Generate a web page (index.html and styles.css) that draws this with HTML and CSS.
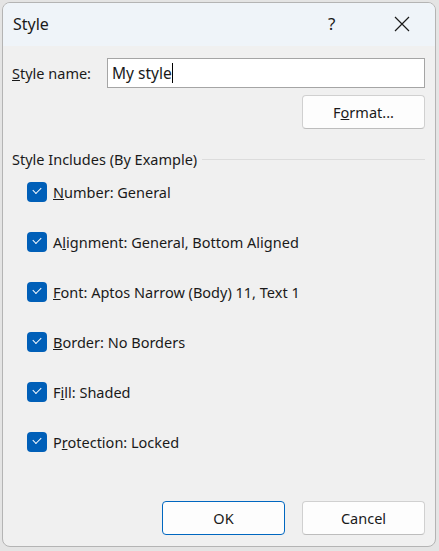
FILE: index.html
```html
<!DOCTYPE html>
<html lang="en">
  <head>
    <title>Style</title>
    <meta charset="UTF-8" />
    <meta name="viewport" content="width=device-width, initial-scale=1.0" />
    <link rel="stylesheet" href="styles.css">
  </head>
  <body>
    <div class="dialog">
      <div class="titlebar">
        <span class="title">Style</span>
        <span class="help">?</span>
        <span class="close">
          <svg width="16" height="16" viewBox="0 0 16 16">
            <path d="M1 1 L15 15 M15 1 L1 15" stroke="#1a1a1a" stroke-width="1.2" fill="none" />
          </svg>
        </span>
      </div>

      <div class="content">
        <div class="name-row">
          <label for="style-name"><u>S</u>tyle name:</label>
          <div class="name-input" id="style-name">My style<span class="caret"></span></div>
        </div>
        <div class="format-row">
          <button class="btn">F<u>o</u>rmat...</button>
        </div>

        <div class="group-title">
          <span>Style Includes (By Example)</span>
          <span class="group-line"></span>
        </div>

        <ul class="includes">
          <li><span class="check"></span><span><u>N</u>umber: General</span></li>
          <li><span class="check"></span><span>A<u>l</u>ignment: General, Bottom Aligned</span></li>
          <li><span class="check"></span><span><u>F</u>ont: Aptos Narrow (Body) 11, Text 1</span></li>
          <li><span class="check"></span><span><u>B</u>order: No Borders</span></li>
          <li><span class="check"></span><span>F<u>i</u>ll: Shaded</span></li>
          <li><span class="check"></span><span>P<u>r</u>otection: Locked</span></li>
        </ul>

        <div class="actions">
          <button class="btn btn-default">OK</button>
          <button class="btn">Cancel</button>
        </div>
      </div>
    </div>
  </body>
</html>
```

FILE: styles.css
```css
body {
  margin: 0;
  height: 551px;
  background: #e4e4e4;
  font-family: "Noto Sans", "Open Sans", sans-serif;
  font-size: 14.5px;
  color: #1a1a1a;
  overflow: hidden;
}
.dialog {
  margin: 2px 0 0 2px;
  width: 434px;
  height: 545px;
  background: #f0f0f0;
  border: 1px solid #b4b4b4;
  border-radius: 8px;
  box-sizing: border-box;
  overflow: hidden;
  display: flex;
  flex-direction: column;
}
.titlebar {
  height: 43px;
  background: #eff4f9;
  display: flex;
  align-items: center;
  padding-left: 10px;
  flex-shrink: 0;
}
.title {
  font-size: 16px;
  flex: 1;
  margin-top: -2px;
}
.help {
  font-size: 17px;
  width: 20px;
  margin-right: 46px;
  margin-top: -2px;
}
.close {
  display: flex;
  width: 16px;
  margin-right: 25px;
  margin-top: -2px;
}
.content {
  flex: 1;
  display: flex;
  flex-direction: column;
  padding: 12px 10px 10px 9px;
}
.name-row {
  display: flex;
  align-items: center;
}
.name-row label {
  width: 95px;
}
.name-input {
  flex: 1;
  height: 30px;
  box-sizing: border-box;
  border: 1px solid #a5a5a5;
  background: #fff;
  padding: 0 4px;
  line-height: 28px;
  font-size: 15.5px;
  display: flex;
  align-items: center;
}
.caret {
  display: inline-block;
  width: 1px;
  height: 20px;
  background: #000;
}
.format-row {
  display: flex;
  justify-content: flex-end;
  margin-top: 7px;
}
.btn {
  width: 123px;
  height: 34px;
  font-family: inherit;
  font-size: 14.5px;
  color: #1a1a1a;
  background: #fdfdfd;
  border: 1px solid #d0d0d0;
  border-bottom-color: #bdbdbd;
  border-radius: 4px;
  cursor: pointer;
}
.btn-default {
  border: 1px solid #0067c0;
}
.group-title {
  display: flex;
  align-items: center;
  margin-top: 20px;
}
.group-line {
  flex: 1;
  height: 1px;
  background: #dcdcdc;
  margin-left: 5px;
}
.includes {
  list-style: none;
  margin: 13px 0 0 15px;
  padding: 0;
  display: flex;
  flex-direction: column;
  gap: 30px;
}
.includes li {
  display: flex;
  align-items: center;
  height: 20px;
}
.check {
  width: 20px;
  height: 20px;
  border-radius: 4px;
  background: #005fb8;
  margin-right: 6px;
  position: relative;
}
.check::after {
  content: "";
  position: absolute;
  left: 6px;
  top: 5px;
  width: 7px;
  height: 4px;
  border-left: 1.3px solid #fff;
  border-bottom: 1.3px solid #fff;
  transform: rotate(-45deg);
}
.actions {
  margin-top: auto;
  display: flex;
  justify-content: flex-end;
  gap: 17px;
  margin-bottom: 1px;
}
```
